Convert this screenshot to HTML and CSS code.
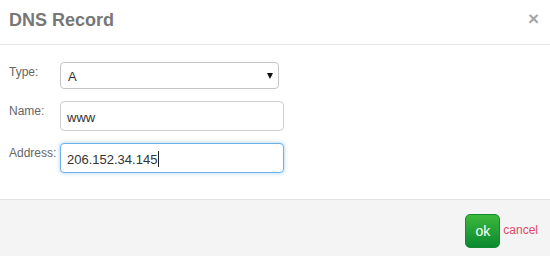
FILE: index.html
```html
<!DOCTYPE html>
<html lang="en">
<head>
<meta charset="utf-8">
<title>DNS Record</title>
<link rel="stylesheet" href="styles.css">
</head>
<body>
<div class="modal">
  <div class="modal-header">
    <h3 class="modal-title">DNS Record</h3>
    <span class="close">&times;</span>
  </div>
  <div class="modal-body">
    <div class="form-grid">
      <label class="field-label">Type:</label>
      <div class="select-wrap">
        <select class="select">
          <option>A</option>
          <option>AAAA</option>
          <option>CNAME</option>
          <option>MX</option>
        </select>
        <span class="select-arrow"></span>
      </div>
      <label class="field-label">Name:</label>
      <div class="text-input">www</div>
      <label class="field-label">Address:</label>
      <div class="text-input focused">206.152.34.145<span class="caret"></span></div>
    </div>
  </div>
  <div class="modal-footer">
    <button class="btn-ok">ok</button>
    <a class="cancel-link" href="#">cancel</a>
  </div>
</div>
</body>
</html>
```
FILE: styles.css
```css
html, body {
  margin: 0;
  padding: 0;
  background: #fff;
}
body {
  font-family: "Liberation Sans", Arial, sans-serif;
  width: 550px;
  height: 256px;
  overflow: hidden;
}
.modal {
  display: flex;
  flex-direction: column;
  height: 256px;
}
.modal-header {
  display: flex;
  align-items: center;
  justify-content: space-between;
  height: 45px;
  box-sizing: border-box;
  padding: 0 11px 0 9px;
  border-bottom: 1px solid #e5e5e5;
}
.modal-title {
  margin: 0;
  font-size: 18px;
  line-height: 20px;
  font-weight: bold;
  color: #777;
  position: relative;
  top: -2px;
}
.close {
  font-size: 19px;
  font-weight: bold;
  line-height: 20px;
  color: #a6a6a6;
  position: relative;
  top: -3px;
}
.modal-body {
  padding: 17px 9px 26px 9px;
}
.form-grid {
  display: grid;
  grid-template-columns: 51px auto;
  row-gap: 12px;
  justify-content: start;
}
.field-label {
  font-size: 12px;
  line-height: 14px;
  color: #666;
  padding-top: 3px;
}
.select-wrap {
  position: relative;
  width: 219px;
  height: 27px;
}
.select {
  -webkit-appearance: none;
  appearance: none;
  width: 219px;
  height: 27px;
  box-sizing: border-box;
  border: 1px solid #c6c6c6;
  border-radius: 4px;
  background: #fff;
  font-family: "Liberation Sans", Arial, sans-serif;
  font-size: 13px;
  color: #333;
  padding: 2px 0 0 7px;
  margin: 0;
  outline: none;
}
.select-arrow {
  position: absolute;
  right: 6px;
  top: 11px;
  width: 0;
  height: 0;
  border-left: 3.5px solid transparent;
  border-right: 3.5px solid transparent;
  border-top: 6px solid #111;
}
.text-input {
  width: 224px;
  height: 30px;
  box-sizing: border-box;
  border: 1px solid #cfcfcf;
  border-radius: 4px;
  background: #fff;
  font-size: 13px;
  line-height: 15px;
  color: #333;
  padding: 8px 6px 0 6px;
  display: flex;
  align-items: flex-start;
}
.text-input.focused {
  border-color: #6fb2ea;
  box-shadow: 0 0 4px rgba(102, 175, 233, 0.6);
}
.caret {
  display: inline-block;
  width: 1px;
  height: 16px;
  background: #222;
  margin-left: 1px;
  margin-top: -1px;
}
.modal-footer {
  flex: 1;
  display: flex;
  justify-content: flex-end;
  align-items: flex-start;
  background: #f4f4f4;
  border-top: 1px solid #e2e2e2;
  padding: 14px 12px 0 0;
}
.btn-ok {
  width: 35px;
  height: 34px;
  box-sizing: border-box;
  border: 1px solid #128a2e;
  border-radius: 5px;
  background: linear-gradient(to bottom, #3db83c, #0b8930);
  color: #fff;
  font-family: "Liberation Sans", Arial, sans-serif;
  font-size: 14px;
  padding: 0;
  margin: 0;
}
.cancel-link {
  margin-left: 3px;
  margin-top: 9px;
  font-size: 12px;
  line-height: 15px;
  color: #e2486a;
  text-decoration: none;
}
```
